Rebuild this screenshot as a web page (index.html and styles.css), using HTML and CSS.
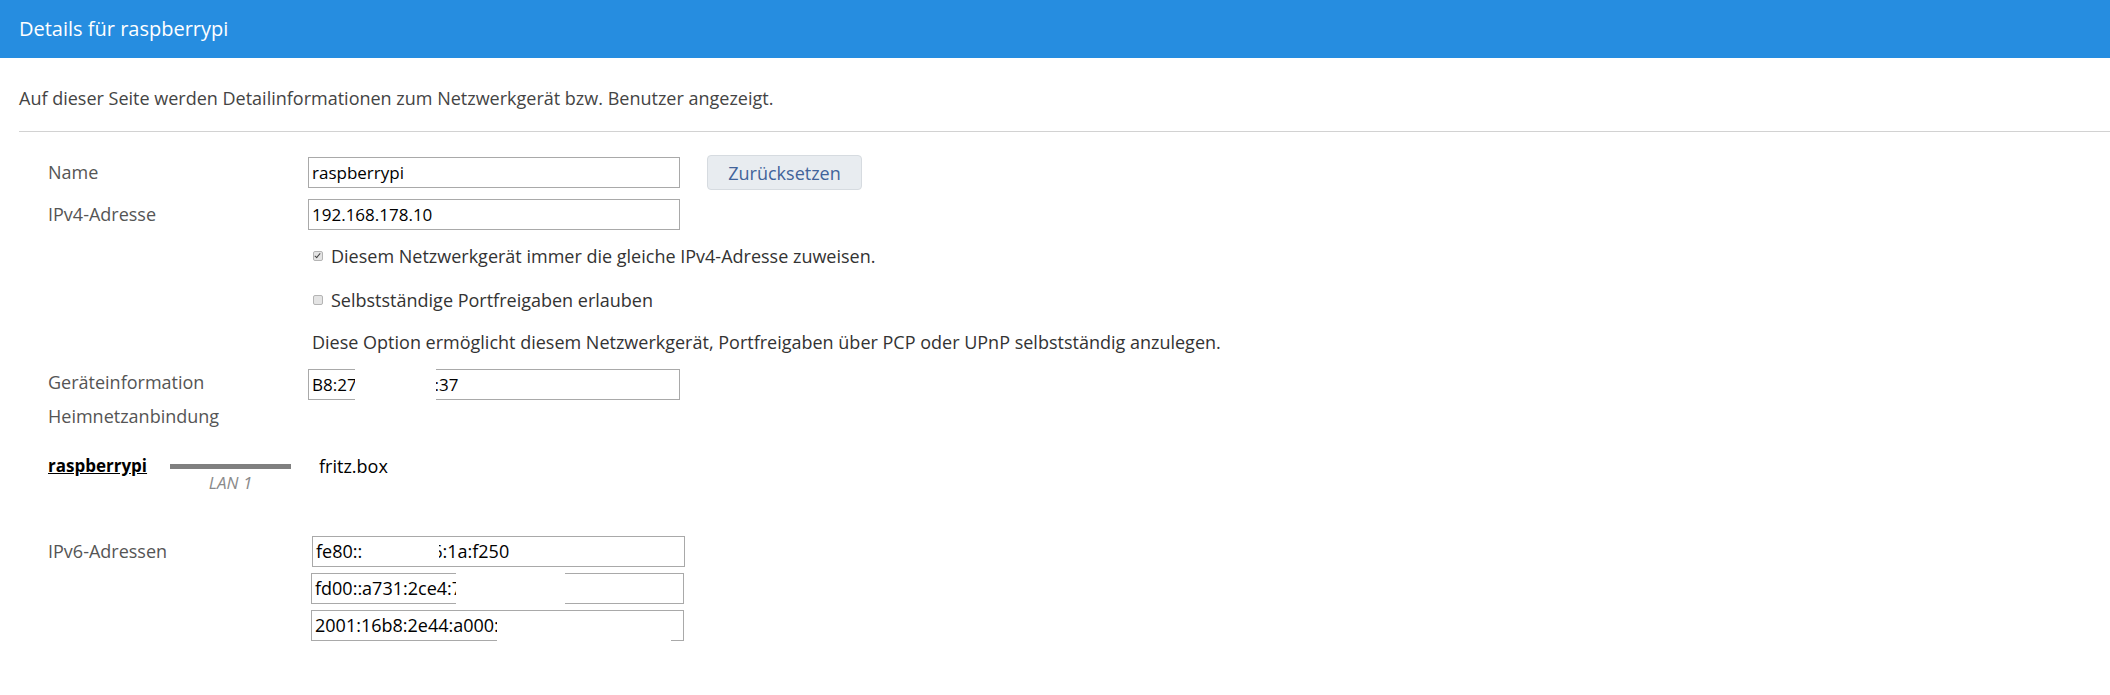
FILE: index.html
```html
<!DOCTYPE html>
<html lang="de">
<head>
<meta charset="UTF-8">
<title>Details für raspberrypi</title>
<link rel="stylesheet" href="styles.css">
</head>
<body>

    <div class="page-title">Details für raspberrypi</div>

    <div class="content">
        <p class="intro">Auf dieser Seite werden Detailinformationen zum Netzwerkgerät bzw. Benutzer angezeigt.</p>
        <hr class="divider">

        <div class="form">
            <div class="row row-name">
                <label class="lbl" for="name">Name</label>
                <div class="field field-inline">
                    <input class="txt" type="text" id="name" value="raspberrypi">
                    <button class="btn">Zurücksetzen</button>
                </div>
            </div>

            <div class="row row-ipv4">
                <label class="lbl" for="ipv4">IPv4-Adresse</label>
                <div class="field">
                    <input class="txt" type="text" id="ipv4" value="192.168.178.10">
                </div>
            </div>

            <div class="row row-check first-check">
                <span></span>
                <label class="check"><input type="checkbox" checked> Diesem Netzwerkgerät immer die gleiche IPv4-Adresse zuweisen.</label>
            </div>

            <div class="row row-check">
                <span></span>
                <label class="check"><input type="checkbox"> Selbstständige Portfreigaben erlauben</label>
            </div>

            <div class="row row-hint">
                <span></span>
                <p class="hint">Diese Option ermöglicht diesem Netzwerkgerät, Portfreigaben über PCP oder UPnP selbstständig anzulegen.</p>
            </div>

            <div class="row row-info">
                <span class="lbl">Geräteinformation</span>
                <div class="field">
                    <div class="txt fake">B8:27<span class="tail mac-tail">:37</span></div>
                    <!-- geschwärzter Bereich -->
                    <div class="redact mac-redact"></div>
                </div>
            </div>

            <div class="row row-home">
                <span class="lbl">Heimnetzanbindung</span>
            </div>

            <div class="connection">
                <a class="dev-name">raspberrypi</a>
                <div class="link">
                    <div class="link-bar"></div>
                    <span class="link-name">LAN 1</span>
                </div>
                <span class="peer">fritz.box</span>
            </div>

            <div class="row row-ipv6">
                <span class="lbl">IPv6-Adressen</span>
                <div class="field field-list">
                    <div class="addr">
                        <div class="txt fake wide">fe80::<span class="tail v6-tail">6:1a:f250</span></div>
                        <div class="redact v6-redact-1"></div>
                    </div>
                    <div class="addr">
                        <div class="txt fake wide shift">fd00::a731:2ce4:7</div>
                        <div class="redact v6-redact-2"></div>
                    </div>
                    <div class="addr">
                        <div class="txt fake wide shift">2001:16b8:2e44:a000:8</div>
                        <div class="redact v6-redact-3"></div>
                    </div>
                </div>
            </div>
        </div>
    </div>

</body>
</html>
```

FILE: styles.css
```css
body {
    margin: 0;
    font-family: "Open Sans", Arial, sans-serif;
    font-size: 18px;
    color: #333;
    background: #fff;
}
.page-title {
    height: 58px;
    line-height: 58px;
    padding-left: 19px;
    background: #268de0;
    color: #fff;
    font-size: 20px;
}
.content {
    padding-left: 19px;
}
.intro {
    margin: 28px 0 0 0;
    line-height: 24px;
    color: #444;
}
.divider {
    margin: 21px 0 0 0;
    border: 0;
    border-top: 1px solid #d2d2d2;
    height: 0;
}
.form {
    padding-left: 29px;
}
.row {
    display: grid;
    grid-template-columns: 260px 1fr;
    align-items: start;
}
.lbl {
    line-height: 31px;
    color: #555;
}
.field {
    position: relative;
    width: 372px;
}
.field-inline {
    display: flex;
    align-items: center;
    width: auto;
}
.txt {
    box-sizing: border-box;
    width: 372px;
    height: 31px;
    padding: 0 3px;
    border: 1px solid #a9a9a9;
    border-radius: 0;
    font-family: "Open Sans", Arial, sans-serif;
    font-size: 17px;
    color: #000;
    background: #fff;
    outline: none;
}
.fake {
    line-height: 29px;
    white-space: nowrap;
    overflow: hidden;
}
.btn {
    margin-left: 27px;
    width: 155px;
    height: 35px;
    padding: 0;
    border: 1px solid #d6dbe0;
    border-radius: 4px;
    background: #e8ecf0;
    color: #41639a;
    font-family: "Open Sans", Arial, sans-serif;
    font-size: 18px;
    cursor: pointer;
}
.row-name {
    margin-top: 23px;
    align-items: center;
}
.row-name .lbl {
    line-height: 35px;
}
.row-ipv4 {
    margin-top: 9px;
}
.row-check {
    margin-top: 20px;
}
.first-check {
    margin-top: 14px;
}
.check {
    display: flex;
    align-items: center;
    line-height: 24px;
    color: #333;
}
.check input {
    appearance: none;
    -webkit-appearance: none;
    position: relative;
    box-sizing: border-box;
    width: 10px;
    height: 10px;
    margin: 0 8px 0 5px;
    border: 1px solid #b4b4b4;
    border-radius: 2px;
    background: #e4e4e4;
}
.check input:checked::after {
    content: "";
    position: absolute;
    left: 2px;
    top: 0px;
    width: 2px;
    height: 5px;
    border: solid #444;
    border-width: 0 1px 1px 0;
    transform: rotate(40deg);
}
.row-hint {
    margin-top: 18px;
}
.hint {
    margin: 0 0 0 4px;
    line-height: 24px;
    color: #333;
}
.row-info {
    margin-top: 15px;
}
.row-info .lbl {
    line-height: 27px;
}
.mac-tail {
    margin-left: 78px;
}
.redact {
    position: absolute;
    background: #fff;
}
.mac-redact {
    left: 47px;
    top: -3px;
    width: 81px;
    height: 37px;
}
.row-home {
    margin-top: 4px;
}
.row-home .lbl {
    line-height: 24px;
}
.connection {
    display: flex;
    align-items: flex-start;
    margin-top: 26px;
    line-height: 24px;
}
.dev-name {
    font-weight: bold;
    font-size: 17px;
    color: #000;
    text-decoration: underline;
}
.link {
    display: flex;
    flex-direction: column;
    align-items: center;
    margin-left: 23px;
    padding-top: 10px;
}
.link-bar {
    width: 121px;
    height: 5px;
    background: #808080;
}
.link-name {
    margin-top: 4px;
    line-height: 20px;
    font-size: 17px;
    font-style: italic;
    color: #8a8a8a;
}
.peer {
    margin-left: 28px;
    color: #000;
}
.row-ipv6 {
    margin-top: 43px;
}
.field-list {
    display: flex;
    flex-direction: column;
    gap: 6px;
    width: 376px;
}
.addr {
    position: relative;
}
.wide {
    width: 373px;
    font-size: 18px;
}
.field-list .txt {
    margin-left: 4px;
}
.field-list .shift {
    margin-left: 3px;
}
.v6-tail {
    margin-left: 70px;
}
.v6-redact-1 {
    left: 58px;
    top: 1px;
    width: 73px;
    height: 29px;
}
.v6-redact-2 {
    left: 148px;
    top: -2px;
    width: 109px;
    height: 35px;
}
.v6-redact-3 {
    left: 189px;
    top: 1px;
    width: 174px;
    height: 35px;
}
```
